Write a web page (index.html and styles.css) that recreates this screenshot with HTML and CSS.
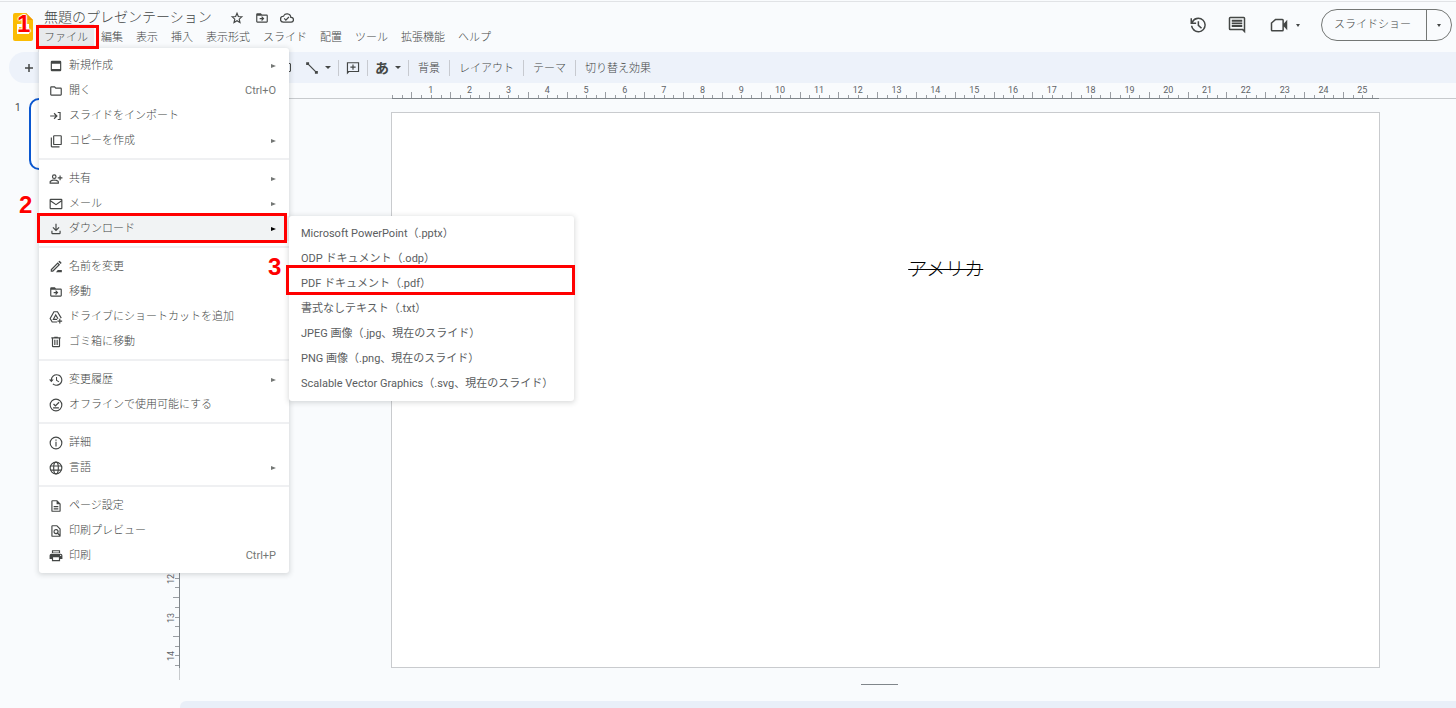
FILE: index.html
```html
<!DOCTYPE html>
<html lang="ja">
<head>
<meta charset="utf-8">
<title>無題のプレゼンテーション</title>
<link rel="stylesheet" href="styles.css">
</head>
<body>
<svg class="sprite" aria-hidden="true">
  <symbol id="i-new" viewBox="0 0 24 24"><path d="M19 3H5a2 2 0 0 0-2 2v14a2 2 0 0 0 2 2h14a2 2 0 0 0 2-2V5a2 2 0 0 0-2-2zm0 14H5V8h14z"/></symbol>
  <symbol id="i-folder" viewBox="0 0 24 24"><path d="M9.2 6l2 2H20v10H4V6h5.200M10 4H4a2 2 0 0 0-2 2v12a2 2 0 0 0 2 2h16a2 2 0 0 0 2-2V8a2 2 0 0 0-2-2h-8z"/></symbol>
  <symbol id="i-import" viewBox="0 0 24 24"><path d="M2 11h9L8 8l1.400-1.400L15 12l-5.600 5.400L8 16l3-3H2zM15 5h5v14h-5v-2h3V7h-3z"/></symbol>
  <symbol id="i-copy" viewBox="0 0 24 24"><path d="M20 2H9a2 2 0 0 0-2 2v13a2 2 0 0 0 2 2h11a2 2 0 0 0 2-2V4a2 2 0 0 0-2-2zm0 15H9V4h11zM3 6v15a2 2 0 0 0 2 2h13v-2H5V6z"/></symbol>
  <symbol id="i-share" viewBox="0 0 24 24"><path d="M9 12a4 4 0 1 0 0-8 4 4 0 0 0 0 8zm0-6a2 2 0 1 1 0 4 2 2 0 0 1 0-4zm0 7c-2.700 0-8 1.300-8 4v3h16v-3c0-2.700-5.300-4-8-4zm6 5H3v-1c0-.7 3.100-2 6-2s6 1.300 6 2zM20 9V6h-2v3h-3v2h3v3h2v-3h3V9z"/></symbol>
  <symbol id="i-mail" viewBox="0 0 24 24"><path d="M21 3H3a2 2 0 0 0-2 2v14a2 2 0 0 0 2 2h18a2 2 0 0 0 2-2V5a2 2 0 0 0-2-2zm0 2.500L12 12 3 5.500V5h18zM21 19H3V8l9 6 9-6z"/></symbol>
  <symbol id="i-download" viewBox="0 0 24 24"><path d="M11 3h2v9l3.500-3.500L18 10l-6 6-6-6 1.500-1.500L11 12zM4 15h2v4h12v-4h2v4a2 2 0 0 1-2 2H6a2 2 0 0 1-2-2z"/></symbol>
  <symbol id="i-rename" viewBox="0 0 24 24"><path d="M15 4l4 4L7 20H3v-4zM5 17v1h1L16 8l-1-1zM16 3l1.300-1.200a1 1 0 0 1 1.400 0l2.500 2.500a1 1 0 0 1 0 1.400L20 7zM12 21l3-4h7v4z"/></symbol>
  <symbol id="i-move" viewBox="0 0 24 24"><path d="M20 6h-8l-2-2H4a2 2 0 0 0-2 2v12a2 2 0 0 0 2 2h16a2 2 0 0 0 2-2V8a2 2 0 0 0-2-2zm0 12H4V8h16zm-8-1l4-4-4-4-1.400 1.400 1.600 1.600H8v2h4.200l-1.600 1.600z"/></symbol>
  <symbol id="i-drive" viewBox="0 0 24 24"><g fill="none" stroke="currentColor" stroke-width="2"><path d="M14 20.500H5.500L2 14.500 8.500 3h6L21 14"/><path d="M14 16H7.500l4-7.500L15.500 15"/><path d="M18.500 15v8M14.500 19h8"/></g></symbol>
  <symbol id="i-trash" viewBox="0 0 24 24"><path d="M15 3H9v1H4v2h1v13a2 2 0 0 0 2 2h10a2 2 0 0 0 2-2V6h1V4h-5zM7 6h10v13H7zm2 2h2v9H9zm4 0h2v9h-2z"/></symbol>
  <symbol id="i-history" viewBox="0 0 24 24"><path d="M13 2A10 10 0 0 0 3 11H0l4 5 4-5H5a8 8 0 1 1 2.500 6.800L6 19.200A10 10 0 1 0 13 2zM12 7v6l4.500 3 1-1.500-3.700-2.500V7z"/></symbol>
  <symbol id="i-offline" viewBox="0 0 24 24"><path d="M12 1a11 11 0 1 0 0 22 11 11 0 0 0 0-22zm0 20a9 9 0 1 1 0-18 9 9 0 0 1 0 18zM16.500 6.500L11 12l-2.500-2.500L7 11l4 4 7-7zM7 16h10v2H7z"/></symbol>
  <symbol id="i-info" viewBox="0 0 24 24"><path d="M11 6h2v2h-2zm0 4h2v8h-2zm1-9a11 11 0 1 0 0 22 11 11 0 0 0 0-22zm0 20a9 9 0 1 1 0-18 9 9 0 0 1 0 18z"/></symbol>
  <symbol id="i-globe" viewBox="0 0 24 24"><g fill="none" stroke="currentColor" stroke-width="2"><circle cx="12" cy="12" r="10"/><ellipse cx="12" cy="12" rx="4" ry="10"/><path d="M3 8.500h18M3 15.500h18"/></g></symbol>
  <symbol id="i-page" viewBox="0 0 24 24"><path d="M14 2H6a2 2 0 0 0-2 2v16a2 2 0 0 0 2 2h12a2 2 0 0 0 2-2V8zM6 20V4h7v5h5v11zM8 12h8v2H8zm0 4h8v2H8z"/></symbol>
  <symbol id="i-preview" viewBox="0 0 24 24"><path d="M14 2H6a2 2 0 0 0-2 2v16a2 2 0 0 0 2 2h12a2 2 0 0 0 2-2V8zM6 20V4h7l5 5v8.500l-2-2a4.500 4.500 0 1 0-1.500 1.500l3 3zM12 10.500a2.500 2.500 0 1 1 0 5 2.500 2.500 0 0 1 0-5z"/></symbol>
  <symbol id="i-print" viewBox="0 0 24 24"><path d="M20 8H4a3 3 0 0 0-3 3v6h4v4h14v-4h4v-6a3 3 0 0 0-3-3zm-3 11H7v-5h10zm3-7a1 1 0 1 1 0-2 1 1 0 0 1 0 2zM19 2H5v5h14zM17 4v2H7V4z"/></symbol>
  <symbol id="i-star" viewBox="0 0 24 24"><path fill="none" stroke="currentColor" stroke-width="2" d="M12 4l2.300 5.500 6 .5-4.500 4 1.300 5.700L12 16.700l-5.100 3 1.300-5.700-4.500-4 6-.5z"/></symbol>
  <symbol id="i-cloud" viewBox="0 0 24 24"><path d="M19.400 10A7.500 7.500 0 0 0 5.400 8 6 6 0 0 0 6 20h13a5 5 0 0 0 .4-10zM19 18H6a4 4 0 0 1 0-8h.7a5.500 5.500 0 0 1 10.800 1.500v.5H19a3 3 0 0 1 0 6zM10 14.200L7.900 12l-1.400 1.400L10 17l6-6-1.400-1.400z"/></symbol>
  <symbol id="i-clock" viewBox="0 0 24 24"><path d="M12.500 2A10 10 0 0 0 4 6.500V3H2v7.500h7.500v-2H5.300A8 8 0 1 1 4.500 13h-2A10 10 0 1 0 12.500 2zM11.500 7v6l4.500 4 1.400-1.500-3.900-3.500V7z"/></symbol>
  <symbol id="i-comment" viewBox="0 0 24 24"><path d="M23 3a2 2 0 0 0-2-2H3a2 2 0 0 0-2 2v14a2 2 0 0 0 2 2h16l4 4zm-2 15l-1-1H3V3h18zM5 5h14v2.500H5zm0 3.500h14V11H5zM5 12h14v2.500H5z"/></symbol>
  <symbol id="i-video" viewBox="0 0 24 24"><path d="M18.500 10V5.500A2 2 0 0 0 16.500 3.500H7L1 9v9.500a2 2 0 0 0 2 2h13.500a2 2 0 0 0 2-2V14l4.500 5V5zM16.500 18.500H3v-8.700l4.800-4.300h8.700z"/></symbol>
  <symbol id="i-addcomment" viewBox="0 0 24 24"><path d="M22.500 2h-21v21l4-4h17zm-2 15h-17V4h17zM11 6h2v3.500h3.500v2H13V15h-2v-3.500H7.500v-2H11z"/></symbol>
  <symbol id="i-line" viewBox="0 0 24 24"><path d="M2 2h5v3.500L18.500 17H22v5h-5v-3.500L5.500 7H2z"/></symbol>
  <symbol id="i-plus" viewBox="0 0 24 24"><path d="M10.500 4h3v6.500H20v3h-6.500V20h-3v-6.500H4v-3h6.500z"/></symbol>
</svg>

<div class="app">
  <header class="header">
    <svg class="logo" viewBox="0 0 20 28" aria-hidden="true"><path fill="#fbbc04" d="M2 0h11l7 7v19a2 2 0 0 1-2 2H2a2 2 0 0 1-2-2V2a2 2 0 0 1 2-2z"/><path fill="#f29900" d="M13 0l7 7h-7z"/><path fill="#fff" d="M4 11h12v10H4zm2 3v4h8v-4z"/></svg>
    <div class="heading">
      <div class="title-row">
        <h1 class="title">無題のプレゼンテーション</h1>
        <button class="icon-button" aria-label="スター"><svg class="icon"><use href="#i-star"/></svg></button>
        <button class="icon-button" aria-label="移動"><svg class="icon"><use href="#i-move"/></svg></button>
        <button class="icon-button" aria-label="保存状況"><svg class="icon"><use href="#i-cloud"/></svg></button>
      </div>
      <nav class="menubar">
        <button class="active">ファイル</button><button>編集</button><button>表示</button><button>挿入</button><button>表示形式</button><button>スライド</button><button>配置</button><button>ツール</button><button>拡張機能</button><button>ヘルプ</button>
      </nav>
    </div>
    <div class="actions">
      <button class="icon-button" aria-label="変更履歴"><svg class="icon large"><use href="#i-clock"/></svg></button>
      <button class="icon-button" aria-label="コメント"><svg class="icon large"><use href="#i-comment"/></svg></button>
      <button class="icon-button meet" aria-label="通話"><svg class="icon large"><use href="#i-video"/></svg><span class="caret small"></span></button>
      <div class="present">
        <button class="present-main">スライドショー</button>
        <button class="present-more" aria-label="その他"><span class="caret small"></span></button>
      </div>
    </div>
  </header>

  <div class="toolbar" role="toolbar">
    <button class="add" aria-label="新しいスライド"><svg class="icon small-icon"><use href="#i-plus"/></svg></button>
    <button class="tool shape" aria-label="図形"><span class="shape-box"></span></button>
    <button class="tool" aria-label="線"><svg class="icon"><use href="#i-line"/></svg><span class="caret"></span></button>
    <span class="divider"></span>
    <button class="tool" aria-label="コメントを追加"><svg class="icon"><use href="#i-addcomment"/></svg></button>
    <span class="divider"></span>
    <button class="tool" aria-label="入力ツール"><span class="kana">あ</span><span class="caret"></span></button>
    <span class="divider"></span>
    <button class="text-tool">背景</button>
    <span class="divider"></span>
    <button class="text-tool">レイアウト</button>
    <span class="divider"></span>
    <button class="text-tool">テーマ</button>
    <span class="divider"></span>
    <button class="text-tool">切り替え効果</button>
  </div>

  <div class="workspace">
    <aside class="filmstrip">
      <span class="slide-number">1</span>
      <div class="thumbnail"></div>
    </aside>
    <main class="editor">
      <div class="ruler-row"><div class="ruler horizontal" data-count="102"></div></div>
      <div class="stage">
        <div class="ruler-column"><div class="ruler vertical" data-count="58"></div></div>
        <div class="canvas">
          <div class="slide"><span class="slide-text">アメリカ</span></div>
          <div class="notes-handle"></div>
        </div>
      </div>
      <div class="notes"></div>
    </main>
  </div>
</div>

<div class="menu file-menu" role="menu">
  <button class="item"><svg class="icon"><use href="#i-new"/></svg><span class="label">新規作成</span><span class="arrow"></span></button>
  <button class="item"><svg class="icon"><use href="#i-folder"/></svg><span class="label">開く</span><kbd>Ctrl+O</kbd></button>
  <button class="item"><svg class="icon"><use href="#i-import"/></svg><span class="label">スライドをインポート</span></button>
  <button class="item"><svg class="icon"><use href="#i-copy"/></svg><span class="label">コピーを作成</span><span class="arrow"></span></button>
  <hr>
  <button class="item"><svg class="icon"><use href="#i-share"/></svg><span class="label">共有</span><span class="arrow"></span></button>
  <button class="item"><svg class="icon"><use href="#i-mail"/></svg><span class="label">メール</span><span class="arrow"></span></button>
  <button class="item selected"><svg class="icon"><use href="#i-download"/></svg><span class="label">ダウンロード</span><span class="arrow"></span></button>
  <hr>
  <button class="item"><svg class="icon"><use href="#i-rename"/></svg><span class="label">名前を変更</span></button>
  <button class="item"><svg class="icon"><use href="#i-move"/></svg><span class="label">移動</span></button>
  <button class="item"><svg class="icon"><use href="#i-drive"/></svg><span class="label">ドライブにショートカットを追加</span></button>
  <button class="item"><svg class="icon"><use href="#i-trash"/></svg><span class="label">ゴミ箱に移動</span></button>
  <hr>
  <button class="item"><svg class="icon"><use href="#i-history"/></svg><span class="label">変更履歴</span><span class="arrow"></span></button>
  <button class="item"><svg class="icon"><use href="#i-offline"/></svg><span class="label">オフラインで使用可能にする</span></button>
  <hr>
  <button class="item"><svg class="icon"><use href="#i-info"/></svg><span class="label">詳細</span></button>
  <button class="item"><svg class="icon"><use href="#i-globe"/></svg><span class="label">言語</span><span class="arrow"></span></button>
  <hr>
  <button class="item"><svg class="icon"><use href="#i-page"/></svg><span class="label">ページ設定</span></button>
  <button class="item"><svg class="icon"><use href="#i-preview"/></svg><span class="label">印刷プレビュー</span></button>
  <button class="item"><svg class="icon"><use href="#i-print"/></svg><span class="label">印刷</span><kbd>Ctrl+P</kbd></button>
</div>

<div class="menu download-menu" role="menu">
  <button class="item">Microsoft PowerPoint（.pptx）</button>
  <button class="item">ODP ドキュメント（.odp）</button>
  <button class="item">PDF ドキュメント（.pdf）</button>
  <button class="item">書式なしテキスト（.txt）</button>
  <button class="item">JPEG 画像（.jpg、現在のスライド）</button>
  <button class="item">PNG 画像（.png、現在のスライド）</button>
  <button class="item">Scalable Vector Graphics（.svg、現在のスライド）</button>
</div>

<div class="mark mark-file"></div>
<div class="mark mark-download"></div>
<div class="mark mark-pdf"></div>
<span class="step step-1">1</span>
<span class="step step-2">2</span>
<span class="step step-3">3</span>

<script src="ruler.js"></script>
</body>
</html>
```

FILE: styles.css
```css
* {
  box-sizing: border-box;
}

body {
  margin: 0;
  height: 100vh;
  overflow: hidden;
  position: relative;
  background: #f9fbfd;
  color: #444746;
  font: 300 11px/16px Roboto, "Noto Sans CJK JP", sans-serif;
}

button {
  border: 0;
  padding: 0;
  margin: 0;
  background: none;
  color: inherit;
  font: inherit;
  white-space: nowrap;
}

.sprite {
  position: absolute;
  width: 0;
  height: 0;
}

.icon {
  display: block;
  flex: none;
  width: 14px;
  height: 14px;
  fill: currentColor;
}

.icon.large {
  width: 18px;
  height: 18px;
}

.icon.small-icon {
  width: 12px;
  height: 12px;
}

.caret {
  border: 3px solid transparent;
  border-top-color: currentColor;
  border-bottom: 0;
}

.caret.small {
  border-width: 3px 2px 0;
}

.app {
  display: flex;
  flex-direction: column;
  height: 100%;
  padding-top: 1px;
}

.header {
  display: flex;
  flex: none;
  height: 51px;
  padding: 0 4px 0 13px;
  border-top: 1px solid #e1e3e6;
}

.logo {
  width: 20px;
  height: 28px;
  margin-top: 11px;
}

.heading {
  flex: 1;
  padding: 3px 0 0 11px;
}

.title-row {
  display: flex;
  align-items: center;
  gap: 11px;
  height: 25px;
}

.title {
  margin: 0 7px 0 0;
  padding-bottom: 2px;
  font-size: 14px;
  font-weight: 300;
  line-height: 20px;
}

.menubar {
  display: flex;
  align-items: flex-start;
  gap: 13px;
}

.menubar .active {
  background: #e8eaed;
  box-shadow: 0 0 0 6px #e8eaed;
}

.actions {
  display: flex;
  align-items: center;
  gap: 21px;
  height: 46px;
}

.meet {
  display: flex;
  align-items: center;
  gap: 8px;
  margin-left: 3px;
}

.present {
  display: flex;
  height: 32px;
  border: 1px solid #747775;
  border-radius: 16px;
}

.present-main {
  padding: 0 15px 0 12px;
}

.present-more {
  display: flex;
  align-items: center;
  justify-content: center;
  width: 25px;
  border-left: 1px solid #747775;
}

.toolbar {
  display: flex;
  flex: none;
  align-items: center;
  height: 31px;
  margin-left: 9px;
  padding-left: 14px;
  border-radius: 16px 0 0 16px;
  background: #edf2fa;
}

.add {
  width: 255px;
}

.tool {
  display: flex;
  align-items: center;
  gap: 6px;
  padding: 0 7px;
}

.shape {
  width: 20px;
  justify-content: flex-end;
}

.shape-box {
  width: 9px;
  height: 9px;
  border: 1px solid #444746;
  border-radius: 1px;
}

.divider {
  width: 1px;
  height: 16px;
  background: #c7cad0;
}

.kana {
  font-size: 14px;
  font-weight: 700;
}

.text-tool {
  padding: 2px 9px 0;
}

.workspace {
  display: flex;
  flex: 1;
  min-height: 0;
}

.filmstrip {
  display: flex;
  flex: none;
  gap: 8px;
  width: 167px;
  padding: 15px 0 0 15px;
  font-size: 10px;
  font-weight: 400;
}

.filmstrip .slide-number {
  padding-top: 2px;
}

.thumbnail {
  flex: 1;
  height: 72px;
  border: 2px solid #0b57d0;
  border-radius: 10px;
  background: #fff;
}

.editor {
  display: flex;
  flex: 1;
  flex-direction: column;
  min-width: 0;
}

.ruler-row {
  flex: none;
  height: 16px;
  padding: 0 77px 0 225px;
  border-bottom: 1px solid #c7cacd;
}

.ruler {
  display: flex;
  color: #5f6368;
  font-size: 9px;
  font-weight: 400;
  line-height: 10px;
}

.horizontal {
  height: 16px;
  align-items: flex-end;
  border-bottom: 1px solid #80868b;
}

.tick {
  flex: 1 1 0;
  min-width: 0;
  min-height: 0;
}

.tick.last {
  flex-grow: 0.6;
}

.horizontal .tick {
  position: relative;
  height: 3px;
  border-left: 1px solid #9a9ea3;
}

.horizontal .half {
  height: 6px;
}

.tick-label {
  position: absolute;
  width: 20px;
  text-align: center;
}

.horizontal .tick-label {
  left: -11px;
  bottom: 3px;
}

.stage {
  display: flex;
  flex: 1;
  min-height: 0;
}

.ruler-column {
  flex: none;
  width: 13px;
  height: 581px;
  padding: 13px 0 12px;
  border-right: 1px solid #c7cacd;
}

.vertical {
  flex-direction: column;
  align-items: flex-end;
  width: 13px;
  height: 100%;
  border-right: 1px solid #80868b;
}

.vertical .tick {
  position: relative;
  width: 4px;
  border-top: 1px solid #9a9ea3;
}

.vertical .half {
  width: 6px;
}

.vertical .last {
  flex-grow: 0.2;
}

.vertical .tick-label {
  right: -2px;
  top: -5px;
  transform: rotate(-90deg);
}

.canvas {
  flex: 1;
  padding: 13px 76px 0 211px;
}

.slide {
  position: relative;
  aspect-ratio: 16 / 9;
  border: 1px solid #c9cbce;
  background: #fff;
}

.slide-text {
  position: absolute;
  left: 52.3%;
  top: 26.200%;
  color: #000;
  font-size: 19px;
  line-height: 24px;
  text-decoration: line-through;
}

.notes-handle {
  width: 37px;
  height: 1px;
  margin: 16px 0 0 47.500%;
  background: #80868b;
}

.notes {
  flex: none;
  height: 7px;
  margin-left: 13px;
  border-radius: 6px 0 0 0;
  background: #e9eff8;
}

.menu {
  position: absolute;
  display: flex;
  flex-direction: column;
  padding: 5px 0;
  border-radius: 3px;
  background: #fff;
  box-shadow: 0 1px 5px 1px rgba(60, 64, 67, 0.18);
}

.file-menu {
  left: 39px;
  top: 48px;
  width: 250px;
}

.download-menu {
  left: 289px;
  top: 216px;
  width: 285px;
}

.item {
  display: flex;
  align-items: center;
  gap: 6px;
  height: 25px;
  padding: 0 13px 0 10px;
  text-align: left;
}

.item.selected {
  background: #f1f3f4;
}

.download-menu .item {
  padding-left: 12px;
  font-weight: 400;
  color: #5a5d60;
}

.label {
  flex: 1;
}

.item kbd {
  font: inherit;
  font-weight: 400;
  color: #747775;
}

.arrow {
  border: 2px solid transparent;
  border-left: 5px solid #747775;
  border-right: 0;
}

.selected .arrow {
  border-left-color: #000;
}

.menu hr {
  width: 100%;
  height: 2px;
  margin: 5px 0 6px;
  border: 0;
  background: #eff0f2;
}

.mark {
  position: absolute;
  border: 3px solid #f00;
}

.mark-file {
  left: 36px;
  top: 25px;
  width: 63px;
  height: 24px;
}

.mark-download {
  left: 37px;
  top: 213px;
  width: 250px;
  height: 30px;
}

.mark-pdf {
  left: 286px;
  top: 265px;
  width: 289px;
  height: 30px;
}

.step {
  position: absolute;
  color: #f00;
  font: 700 24px/28px "Liberation Sans", sans-serif;
  text-shadow: 1px 0 1px #fff, -1px 0 1px #fff, 0 1px 1px #fff, 0 -1px 1px #fff;
}

.step-1 {
  left: 17px;
  top: 10px;
}

.step-2 {
  left: 19px;
  top: 191px;
}

.step-3 {
  left: 268px;
  top: 253px;
}
```

FILE: ruler.js
```js
// Each tick is a quarter of a centimetre; every fourth one carries a number.
document.querySelectorAll(".ruler").forEach(function (ruler) {
  var count = Number(ruler.dataset.count);
  for (var i = 0; i < count; i++) {
    var tick = document.createElement("span");
    tick.className = "tick";
    if (i % 4 === 2) tick.classList.add("half");
    if (i === count - 1) tick.classList.add("last");
    if (i > 0 && i % 4 === 0) {
      var label = document.createElement("span");
      label.className = "tick-label";
      label.textContent = i / 4;
      tick.appendChild(label);
    }
    ruler.appendChild(tick);
  }
});
```
